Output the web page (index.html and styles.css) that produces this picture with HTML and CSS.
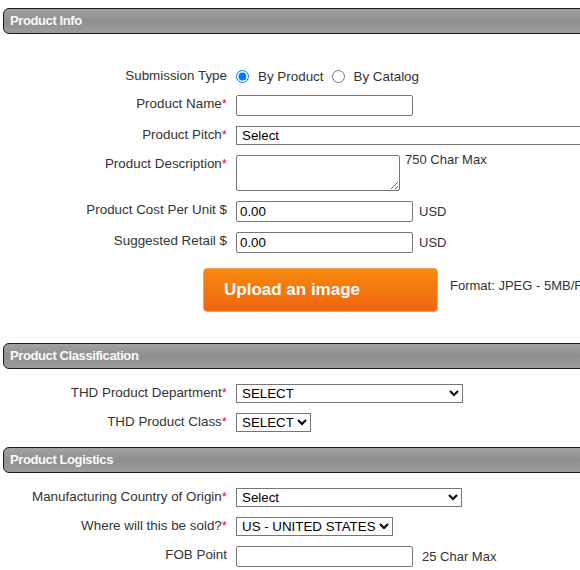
FILE: index.html
```html
<!DOCTYPE html>
<html>
<head>
<meta charset="utf-8">
<link rel="stylesheet" href="styles.css">
</head>
<body>
<div class="page">
  <div class="section-head">Product Info</div>
  <div class="form form-info">
    <div class="row">
      <div class="label">Submission Type</div>
      <div class="control radios">
        <label class="radio"><input type="radio" name="st" checked>By Product</label>
        <label class="radio"><input type="radio" name="st">By Catalog</label>
      </div>
    </div>
    <div class="row">
      <div class="label">Product Name<span class="req">*</span></div>
      <div class="control"><input type="text" class="txt"></div>
    </div>
    <div class="row">
      <div class="label">Product Pitch<span class="req">*</span></div>
      <div class="control"><select class="sel sel-pitch"><option>Select</option></select></div>
    </div>
    <div class="row">
      <div class="label">Product Description<span class="req">*</span></div>
      <div class="control"><textarea class="area"></textarea><span class="note note-top">750 Char Max</span></div>
    </div>
    <div class="row">
      <div class="label">Product Cost Per Unit $</div>
      <div class="control"><input type="text" class="txt" value="0.00"><span class="note">USD</span></div>
    </div>
    <div class="row">
      <div class="label">Suggested Retail $</div>
      <div class="control"><input type="text" class="txt" value="0.00"><span class="note">USD</span></div>
    </div>
    <div class="upload-row">
      <button class="upload">Upload an image</button>
      <span class="format">Format: JPEG - 5MB/File Max</span>
    </div>
  </div>

  <div class="section-head">Product Classification</div>
  <div class="form form-class">
    <div class="row">
      <div class="label">THD Product Department<span class="req">*</span></div>
      <div class="control"><select class="sel sel-wide"><option>SELECT</option></select></div>
    </div>
    <div class="row">
      <div class="label">THD Product Class<span class="req">*</span></div>
      <div class="control"><select class="sel"><option>SELECT</option></select></div>
    </div>
  </div>

  <div class="section-head">Product Logistics</div>
  <div class="form form-log">
    <div class="row">
      <div class="label">Manufacturing Country of Origin<span class="req">*</span></div>
      <div class="control"><select class="sel sel-country"><option>Select</option></select></div>
    </div>
    <div class="row">
      <div class="label">Where will this be sold?<span class="req">*</span></div>
      <div class="control"><select class="sel"><option>US - UNITED STATES</option></select></div>
    </div>
    <div class="row">
      <div class="label">FOB Point</div>
      <div class="control"><input type="text" class="txt"><span class="note note-fob">25 Char Max</span></div>
    </div>
  </div>
</div>
</body>
</html>
```

FILE: styles.css
```css
html, body {
  margin: 0;
  padding: 0;
  overflow: hidden;
  background: #fff;
}
body {
  font-family: "Liberation Sans", Arial, sans-serif;
  font-size: 13px;
  color: #333;
}
.page {
  width: 760px;
  padding: 8px 0 0 3px;
}
.section-head {
  height: 24px;
  line-height: 24px;
  border: 1px solid #1a1a1a;
  border-radius: 6px 0 0 6px;
  background: linear-gradient(#a2a2a2 0%, #8e8e8e 50%, #9c9c9c 100%);
  color: #fafafa;
  font-weight: bold;
  font-size: 13px;
  letter-spacing: -0.4px;
  padding-left: 6px;
}
.form {
  margin-left: -3px;
}
.form-info { padding: 28px 0 31px; }
.form-class { padding: 10px 0 10px; }
.form-log { padding: 10px 0 0; }
.row {
  display: flex;
  align-items: flex-start;
  padding: 5px 0;
}
.label {
  width: 227px;
  flex: none;
  text-align: right;
  line-height: 17px;
  margin-right: 9px;
  font-size: 13.4px;
}
.req { color: #e0151b; }
.control {
  display: flex;
  align-items: flex-start;
}
.radios {
  height: 18px;
  align-items: center;
  font-size: 13.4px;
}
.radio {
  display: inline-flex;
  align-items: center;
  margin-right: 8px;
}
.radio input {
  margin: 0 9px 0 0;
  width: 13px;
  height: 13px;
}
.txt {
  box-sizing: border-box;
  width: 177px;
  height: 21px;
  margin: 0;
  padding: 1px 3px;
  border: 1px solid #767676;
  border-radius: 2px;
  font-family: "Liberation Sans", Arial, sans-serif;
  font-size: 13.33px;
  color: #000;
}
.area {
  box-sizing: border-box;
  width: 164px;
  height: 36px;
  margin: 0;
  border: 1px solid #767676;
  border-radius: 2px;
  font-family: "Liberation Sans", Arial, sans-serif;
  font-size: 13.33px;
}
.sel {
  box-sizing: border-box;
  height: 19px;
  margin: 0;
  border: 1px solid #767676;
  border-radius: 0;
  background: #fff;
  font-family: "Liberation Sans", Arial, sans-serif;
  font-size: 13.33px;
  color: #000;
  padding: 0 0 0 1px;
}
.sel-pitch { width: 420px; }
.sel-wide { width: 227px; }
.sel-country { width: 226px; }
.note {
  margin-left: 6px;
  line-height: 21px;
}
.note-top { line-height: 13px; margin-left: 5px; margin-top: -2px; }
.note-fob { margin-left: 9px; }
.upload-row {
  display: flex;
  align-items: center;
  padding: 10px 0 0 203px;
}
.upload {
  box-sizing: border-box;
  width: 235px;
  height: 44px;
  border: 1px solid #f0a060;
  border-radius: 4px;
  background: linear-gradient(#f88a0e, #ee6510);
  color: #fff;
  font-family: "Liberation Sans", Arial, sans-serif;
  font-weight: bold;
  font-size: 17px;
  text-align: left;
  padding: 0 0 0 20px;
  margin: 0;
}
.format {
  margin-left: 12px;
  margin-top: -9px;
  white-space: nowrap;
}
```
